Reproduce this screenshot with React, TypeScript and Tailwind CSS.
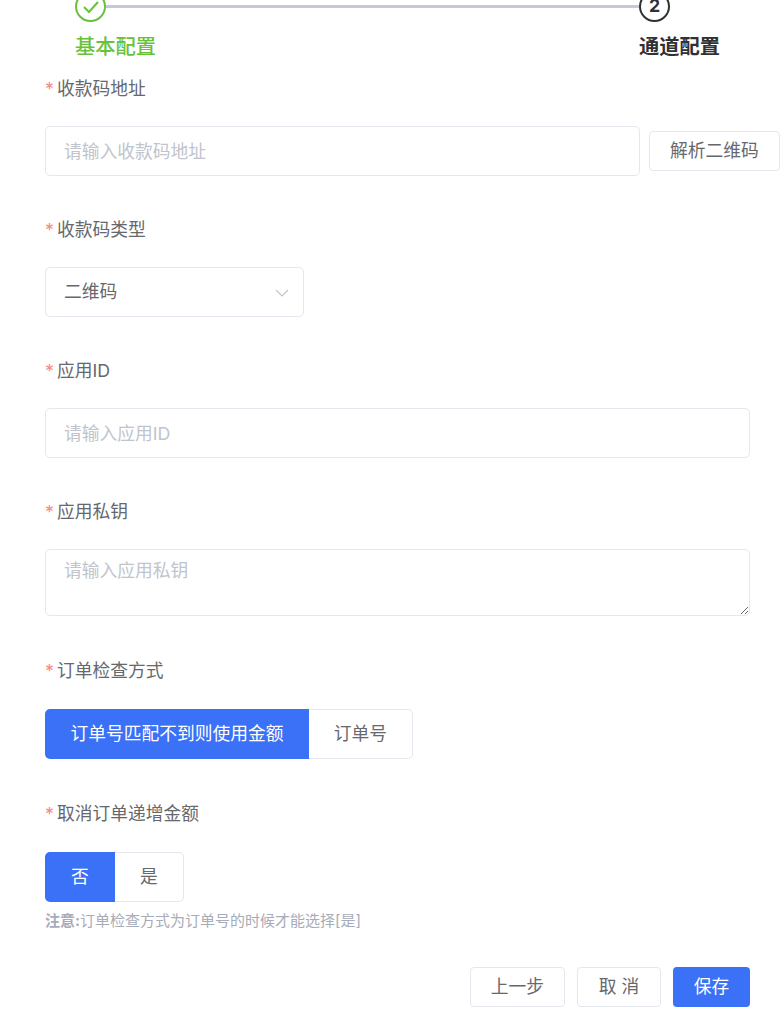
const font = { fontFamily: 'Inter, "Noto Sans CJK SC", sans-serif' };

function Label({ text, mt = "mt-0", mb = "mb-[26px]" }: { text: string; mt?: string; mb?: string }) {
  return (
    <label className={`block h-[24px] leading-[26px] text-[17.75px] text-[#66686d] ${mb} ${mt}`}>
      <span className="text-[#f78989] mr-[3px]">*</span>
      {text}
    </label>
  );
}

const inputCls =
  "block h-[50px] rounded-[5px] border border-[#e4e7ed] bg-white px-[19px] text-[17.75px] text-[#66686d] outline-none placeholder:text-[#c0c4cc]";

function Segment({ items }: { items: { text: string; w: string; active?: boolean }[] }) {
  return (
    <div className="flex h-[50px] w-fit">
      {items.map((it) => (
        <div
          key={it.text}
          className={`flex items-center justify-center text-[17.75px] ${it.w} ${
            it.active
              ? "bg-[#3a71f7] text-white rounded-l-[5px]"
              : "bg-white text-[#66686d] border border-l-0 border-[#e4e7ed] rounded-r-[5px]"
          }`}
        >
          {it.text}
        </div>
      ))}
    </div>
  );
}

export default function App() {
  return (
    <div className="h-[1024px] w-[783px] overflow-hidden bg-white" style={font}>
      <div className="-mt-[9px] flex pl-[75px] pr-[64px]">
        <div className="flex-1">
          <div className="flex items-center">
            <div className="flex h-[31px] w-[31px] shrink-0 items-center justify-center rounded-full border-[2.5px] border-[#67c23a] bg-white">
              <svg width="18" height="14" viewBox="0 0 18 14" fill="none" stroke="#67c23a" strokeWidth="2">
                <path d="M2 7l5 5 9-10" />
              </svg>
            </div>
            <div className="h-[3px] flex-1 bg-[#c8c9d6]" />
          </div>
          <div className="mt-[11px] h-[28px] whitespace-nowrap text-[20.25px] font-medium leading-[28px] text-[#67c23a]">基本配置</div>
        </div>
        <div className="w-[80px] shrink-0">
          <div className="flex h-[31px] w-[31px] items-center justify-center rounded-full border-[2.5px] border-[#303133] text-[17.75px] font-bold text-[#303133]">
            2
          </div>
          <div className="mt-[11px] h-[28px] whitespace-nowrap text-[20.25px] font-bold leading-[28px] text-[#303133]">通道配置</div>
        </div>
      </div>

      <form className="mt-[15px] pl-[45px] pr-[33px]">
        <Label text="收款码地址" />
        <div className="flex w-[735px] items-center gap-[9px]">
          <input className={`${inputCls} !px-[18px] w-[595px] shrink-0`} placeholder="请输入收款码地址" />
          <button
            type="button"
            className="h-[40px] w-[131px] shrink-0 rounded-[4px] border border-[#e4e7ed] bg-white pt-[1px] text-[17.75px] text-[#66686d]"
          >
            解析二维码
          </button>
        </div>

        <Label text="收款码类型" mt="mt-[41px]" />
        <div className="flex h-[50px] w-[259px] items-center justify-between rounded-[5px] border border-[#e4e7ed] bg-white pl-[18px] pr-[14px] pt-[1px] text-[17.75px] text-[#66686d]">
          二维码
          <svg width="14" height="8" viewBox="0 0 14 8" fill="none" stroke="#c0c4cc" strokeWidth="1.2">
            <path d="M1 1l6 6 6-6" />
          </svg>
        </div>

        <Label text="应用ID" mt="mt-[41px]" />
        <input className={`${inputCls} !px-[18px] w-[705px]`} placeholder="请输入应用ID" />

        <Label text="应用私钥" mt="mt-[41px]" />
        <textarea
          className="block h-[67px] w-[705px] resize-y rounded-[5px] border border-[#e4e7ed] bg-white px-[18px] py-[8px] text-[17.75px] leading-[26px] text-[#66686d] outline-none placeholder:text-[#c0c4cc]"
          placeholder="请输入应用私钥"
        />

        <Label text="订单检查方式" mt="mt-[42px]" mb="mb-[27px]" />
        <Segment
          items={[
            { text: "订单号匹配不到则使用金额", w: "w-[264px]", active: true },
            { text: "订单号", w: "w-[104px]" },
          ]}
        />

        <Label text="取消订单递增金额" mt="mt-[42px]" mb="mb-[27px]" />
        <Segment
          items={[
            { text: "否", w: "w-[70px]", active: true },
            { text: "是", w: "w-[69px]" },
          ]}
        />
        <p className="mt-[9px] h-[20px] text-[15px] leading-[20px] text-[#a8abb8]">
          <b className="font-bold">注意:</b>订单检查方式为订单号的时候才能选择[是]
        </p>

        <div className="mt-[36px] flex justify-end gap-[12px]">
          <button type="button" className="h-[40px] w-[95px] rounded-[4px] border border-[#e4e7ed] bg-white pt-[1px] text-[17.75px] text-[#66686d]">
            上一步
          </button>
          <button type="button" className="h-[40px] w-[84px] rounded-[4px] border border-[#e4e7ed] bg-white pt-[1px] text-[17.75px] text-[#66686d]">
            取 消
          </button>
          <button type="button" className="h-[40px] w-[77px] rounded-[4px] bg-[#3a71f7] pt-[1px] text-[17.75px] text-white">
            保存
          </button>
        </div>
      </form>
    </div>
  );
}
